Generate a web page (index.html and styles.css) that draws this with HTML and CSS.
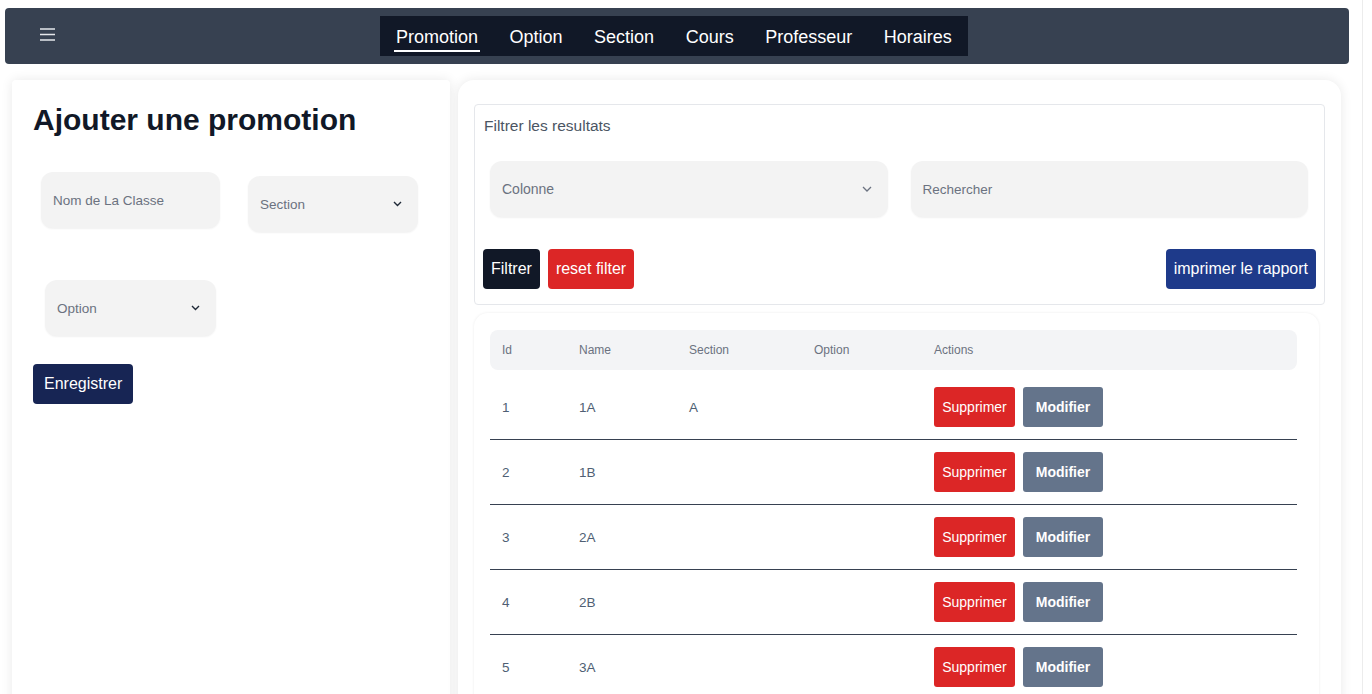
FILE: index.html
```html
<!DOCTYPE html>
<html lang="fr">
<head>
<meta charset="utf-8">
<title>Promotions</title>
<link rel="stylesheet" href="styles.css">
</head>
<body>
<div class="page">
  <header class="topbar">
    <button class="menu-btn" aria-label="menu">
      <svg width="15" height="13" viewBox="0 0 15 13"><path d="M0 1h15M0 6.5h15M0 12h15" stroke="#e5e7eb" stroke-width="1.3" fill="none"/></svg>
    </button>
    <nav class="nav">
      <a class="nav-link active">Promotion</a>
      <a class="nav-link">Option</a>
      <a class="nav-link">Section</a>
      <a class="nav-link">Cours</a>
      <a class="nav-link">Professeur</a>
      <a class="nav-link">Horaires</a>
    </nav>
  </header>

  <main class="main">
    <section class="card form-card">
      <h1 class="title">Ajouter une promotion</h1>
      <div class="fields">
        <div class="field field-name">
          <span class="placeholder">Nom de La Classe</span>
        </div>
        <div class="field field-select field-section">
          <span class="placeholder">Section</span>
          <svg class="chev" width="9" height="6" viewBox="0 0 9 6"><path d="M1 1l3.5 3.5L8 1" stroke="#1f2937" stroke-width="1.4" fill="none"/></svg>
        </div>
        <div class="field field-select field-option">
          <span class="placeholder">Option</span>
          <svg class="chev" width="9" height="6" viewBox="0 0 9 6"><path d="M1 1l3.5 3.5L8 1" stroke="#1f2937" stroke-width="1.4" fill="none"/></svg>
        </div>
      </div>
      <button class="btn btn-save">Enregistrer</button>
    </section>

    <section class="card list-card">
      <div class="filter-box">
        <div class="filter-title">Filtrer les resultats</div>
        <div class="filter-fields">
          <div class="field field-select wide">
            <span class="placeholder big">Colonne</span>
            <svg class="chev" width="10" height="6" viewBox="0 0 10 6"><path d="M1 1l4 4 4-4" stroke="#6b7280" stroke-width="1.3" fill="none"/></svg>
          </div>
          <div class="field wide">
            <span class="placeholder">Rechercher</span>
          </div>
        </div>
        <div class="filter-actions">
          <button class="btn btn-dark">Filtrer</button>
          <button class="btn btn-red">reset filter</button>
          <button class="btn btn-blue push-right">imprimer le rapport</button>
        </div>
      </div>

      <div class="table-wrap">
        <div class="trow thead">
          <div class="cell">Id</div>
          <div class="cell">Name</div>
          <div class="cell">Section</div>
          <div class="cell">Option</div>
          <div class="cell">Actions</div>
        </div>
        <div class="tbody">
          <div class="trow">
            <div class="cell">1</div><div class="cell">1A</div><div class="cell">A</div><div class="cell"></div>
            <div class="cell actions"><button class="btn-sm del">Supprimer</button><button class="btn-sm edit">Modifier</button></div>
          </div>
          <div class="trow">
            <div class="cell">2</div><div class="cell">1B</div><div class="cell"></div><div class="cell"></div>
            <div class="cell actions"><button class="btn-sm del">Supprimer</button><button class="btn-sm edit">Modifier</button></div>
          </div>
          <div class="trow">
            <div class="cell">3</div><div class="cell">2A</div><div class="cell"></div><div class="cell"></div>
            <div class="cell actions"><button class="btn-sm del">Supprimer</button><button class="btn-sm edit">Modifier</button></div>
          </div>
          <div class="trow">
            <div class="cell">4</div><div class="cell">2B</div><div class="cell"></div><div class="cell"></div>
            <div class="cell actions"><button class="btn-sm del">Supprimer</button><button class="btn-sm edit">Modifier</button></div>
          </div>
          <div class="trow">
            <div class="cell">5</div><div class="cell">3A</div><div class="cell"></div><div class="cell"></div>
            <div class="cell actions"><button class="btn-sm del">Supprimer</button><button class="btn-sm edit">Modifier</button></div>
          </div>
        </div>
      </div>
    </section>
  </main>
</div>
</body>
</html>
```

FILE: styles.css
```css
* { box-sizing: border-box; }

html, body {
  margin: 0;
  padding: 0;
  height: 100%;
  overflow: hidden;
}

body {
  background: #ffffff;
  font-family: "Segoe UI", "Liberation Sans", Arial, sans-serif;
  color: #111827;
}

.page {
  width: 1363px;
  min-height: 100%;
  border-right: 1px solid #ececec;
  padding-top: 8px;
}

/* ---------- top bar ---------- */
.topbar {
  margin-left: 5px;
  width: 1344px;
  height: 56px;
  background: #374151;
  border-radius: 4px;
  display: flex;
  align-items: center;
  padding: 8px 0 8px 35px;
}

.menu-btn {
  background: none;
  border: 0;
  padding: 0;
  width: 15px;
  height: 13px;
  display: flex;
  margin-top: -4px;
}

.nav {
  margin-left: 325px;
  height: 40px;
  background: #111827;
  display: flex;
  align-items: flex-start;
  gap: 27.5px;
  padding: 0 14px;
}

.nav-link {
  color: #ffffff;
  font-size: 18px;
  line-height: 20px;
  padding: 11px 2px 3px;
  border-bottom: 2px solid transparent;
}

.nav-link.active {
  border-bottom-color: #ffffff;
}

/* ---------- main ---------- */
.main {
  margin: 16px 0 0 12px;
  display: grid;
  grid-template-columns: 438px 883px;
  column-gap: 8px;
  align-items: stretch;
}

.card {
  background: #ffffff;
  box-shadow: 0 0 12px rgba(0, 0, 0, 0.09);
}

.form-card {
  border-radius: 4px;
  padding: 22px 21px;
  min-height: 660px;
}

.title {
  margin: 0;
  font-size: 30px;
  line-height: 36px;
  font-weight: 700;
  color: #111827;
}

.fields {
  display: flex;
  flex-wrap: wrap;
  align-items: flex-start;
  width: 400px;
}

.field {
  height: 56px;
  background: #f3f3f3;
  border-radius: 12px;
  box-shadow: 0 1px 2px rgba(0, 0, 0, 0.06);
  display: flex;
  align-items: center;
  justify-content: space-between;
  padding: 0 12px;
}

.field-select { padding-right: 16px; }

.placeholder {
  font-size: 13.5px;
  color: #6b7280;
}

.placeholder.big { font-size: 14px; }

.chev { display: block; }

.field-name {
  width: 179px;
  margin: 34px 0 0 8px;
}

.field-section {
  width: 170px;
  margin: 38px 0 0 28px;
}

.field-option {
  width: 171px;
  margin: 48px 200px 0 12px;
}

.btn {
  border: 0;
  border-radius: 4px;
  height: 40px;
  color: #ffffff;
  font-family: inherit;
  font-size: 16px;
  padding: 0 8px;
  cursor: pointer;
}

.btn-save {
  margin-top: 28px;
  background: #172554;
  padding: 0 11px;
  width: 100px;
}

.btn-dark { background: #111827; }
.btn-red { background: #dc2626; }
.btn-blue { background: #1e3a8a; }

/* ---------- list card ---------- */
.list-card {
  border-radius: 16px;
  padding: 24px 16px 0 16px;
  min-height: 660px;
}

.filter-box {
  border: 1px solid #e5e7eb;
  border-radius: 4px;
  padding: 10px 8px 15px 8px;
}

.filter-title {
  font-size: 15.5px;
  line-height: 22px;
  color: #4b5563;
  padding-left: 1px;
}

.filter-fields {
  margin: 24px 8px 0 7px;
  display: grid;
  grid-template-columns: 1fr 1fr;
  column-gap: 23px;
}

.filter-actions {
  margin-top: 32px;
  display: flex;
  gap: 8px;
}

.push-right { margin-left: auto; }

/* ---------- table ---------- */
.table-wrap {
  margin: 8px 6px 0 0;
  border-radius: 14px;
  box-shadow: 0 0 3px rgba(0, 0, 0, 0.08);
  padding: 17px 22px 10px 16px;
  background: #ffffff;
}

.trow {
  display: grid;
  grid-template-columns: 77px 110px 125px 120px 1fr;
  align-items: center;
}

.thead {
  height: 40px;
  background: #f3f4f6;
  border-radius: 8px;
  font-size: 12px;
  color: #6b7280;
}

.cell { padding-left: 12px; }

.tbody { margin-top: 5px; }

.tbody .trow {
  height: 65px;
  border-bottom: 1px solid #374151;
  font-size: 13.5px;
  color: #4f5f74;
}

.actions {
  display: flex;
  gap: 8px;
}

.btn-sm {
  height: 40px;
  border: 0;
  border-radius: 3px;
  color: #ffffff;
  font-family: inherit;
  font-size: 14px;
  cursor: pointer;
}

.del {
  background: #dc2626;
  width: 81px;
  padding: 0;
}

.edit {
  background: #64748b;
  font-weight: 700;
  width: 80px;
  padding: 0;
}
```
